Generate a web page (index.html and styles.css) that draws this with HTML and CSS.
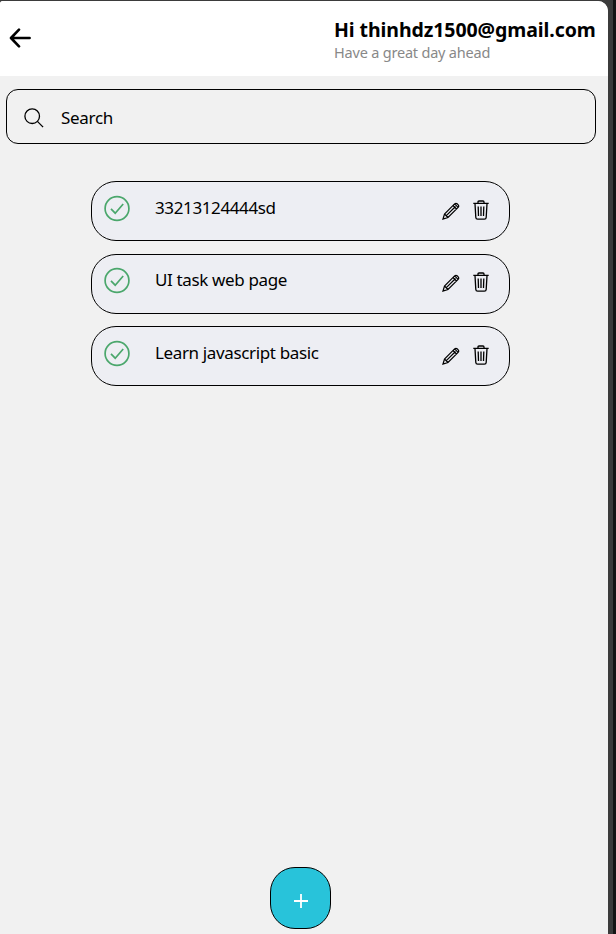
FILE: index.html
```
<!DOCTYPE html>
<html lang="en">
<head>
<meta charset="utf-8">
<title>Tasks</title>
<link rel="stylesheet" href="styles.css">
</head>
<body>
<svg class="defs" aria-hidden="true">
  <symbol id="check" viewBox="0 0 26 26"><circle cx="13" cy="13" r="11.9"/><path d="M7 13.4l4.2 4.3 8-9.2"/></symbol>
  <symbol id="pencil" viewBox="0 0 18 18"><path d="M1 17l1.5-5L12.6 1.9q1.4-1.3 2.8.1l.6.6q1.4 1.4.1 2.8L6 15.5zM2.5 12L6 15.5M4.3 13.7l9.2-9.2M11 3.5L14.5 7M12.6 1.9l3.5 3.5M1.2 16.8l1-1"/></symbol>
  <symbol id="trash" viewBox="0 0 16 20"><path d="M.3 3.4h15.4M5 3.2V2.1Q5 1 6 1h4q1 0 1 1.1v1.1M2 3.6l.8 13.8q.1 1.8 1.8 1.8h6.8q1.7 0 1.8-1.8L14 3.6M5.2 6.5l.3 9.5M8 6.5V16M10.8 6.5l-.3 9.5"/></symbol>
</svg>
<div class="screen">
  <header class="header">
    <svg class="back" viewBox="0 0 22 20"><path d="M10 1.6L2 10l8 8.4M2.4 10H20.6"/></svg>
    <div class="greeting">
      <div class="hello"><span>Hi thinhdz1500@gmail.com</span></div>
      <div class="sub"><span>Have a great day ahead</span></div>
    </div>
  </header>
  <div class="search">
    <svg viewBox="0 0 20 20"><circle cx="8.2" cy="8.2" r="7.3"/><path d="M13.4 13.4l5.7 5.7"/></svg>
    <span>Search</span>
  </div>
  <main class="tasks">
    <div class="task"><svg class="check"><use href="#check"/></svg><span class="name digits">33213124444sd</span><svg class="pencil"><use href="#pencil"/></svg><svg class="trash"><use href="#trash"/></svg></div>
    <div class="task"><svg class="check"><use href="#check"/></svg><span class="name">UI task web page</span><svg class="pencil"><use href="#pencil"/></svg><svg class="trash"><use href="#trash"/></svg></div>
    <div class="task"><svg class="check"><use href="#check"/></svg><span class="name">Learn javascript basic</span><svg class="pencil"><use href="#pencil"/></svg><svg class="trash"><use href="#trash"/></svg></div>
  </main>
  <button class="add" aria-label="Add"><svg viewBox="0 0 14 14"><path d="M7 0v14M0 7h14"/></svg></button>
</div>
</body>
</html>
```
FILE: styles.css
```
* { box-sizing: border-box; }
body {
  margin: 0;
  height: 934px;
  padding-top: 1px;
  overflow: hidden;
  background: linear-gradient(90deg, #3b3b3b 613px, #151515 613px);
  font-family: "Noto Sans", "Open Sans", sans-serif;
  color: #000;
}
.defs { display: none; }
svg { fill: none; stroke: #000; flex: none; }
.screen {
  width: 608px;
  height: 933px;
  display: flex;
  flex-direction: column;
  align-items: flex-start;
  background: #f1f1f1;
  border-radius: 3px 10px 0 0;
  overflow: hidden;
}
.header {
  width: 100%;
  height: 75px;
  background: #fff;
  display: flex;
  justify-content: space-between;
  padding: 15px 12px 0 9px;
}
.back { width: 22px; height: 20px; margin-top: 12px; stroke-width: 2.6; stroke-linecap: round; stroke-linejoin: round; }
.greeting { flex: 0 0 262px; white-space: nowrap; }
.hello { font-size: 19.5px; font-weight: 700; line-height: 27px; letter-spacing: -.08px; }
.sub { font-size: 14.5px; line-height: 18px; color: #888; letter-spacing: -.2px; }
.search {
  width: 590px;
  height: 55px;
  margin: 13px 0 37px 6px;
  border: 1px solid #000;
  border-radius: 12px;
  display: flex;
  align-items: center;
  gap: 17px;
  padding-left: 17px;
  font-size: 17px;
  letter-spacing: -.3px;
}
.search svg { width: 20px; height: 20px; margin-top: 2px; stroke-width: 1.3; }
.search span { margin-top: 2px; }
.tasks { display: flex; flex-direction: column; gap: 12.5px; margin-left: 91px; }
.task {
  width: 419px;
  height: 60px;
  border: 1px solid #000;
  border-radius: 25px;
  background: #edeef3;
  display: flex;
  align-items: flex-start;
  padding: 13px 20px 0 12px;
}
.task:nth-child(2) { padding-top: 12px; }
.check { width: 26px; height: 27px; stroke: #4ba76c; stroke-width: 1.7; }
.name { flex: 1; margin-left: 25px; font-size: 17px; line-height: 26px; letter-spacing: -.36px; }
.digits { letter-spacing: -.38px; }
.pencil { width: 18px; height: 18px; margin: 7px 13px 0 0; stroke-width: 1.2; }
.trash { width: 16px; height: 20px; margin-top: 5px; stroke-width: 1.3; }
.add {
  width: 61px;
  height: 62px;
  margin: auto 0 5px 270px;
  padding: 5px 0 0;
  border: 1px solid #000;
  border-radius: 25px;
  background: #28c3da;
  display: flex;
  align-items: center;
  justify-content: center;
}
.add svg { width: 14px; height: 14px; stroke: #fff; stroke-width: 1.8; }
```
